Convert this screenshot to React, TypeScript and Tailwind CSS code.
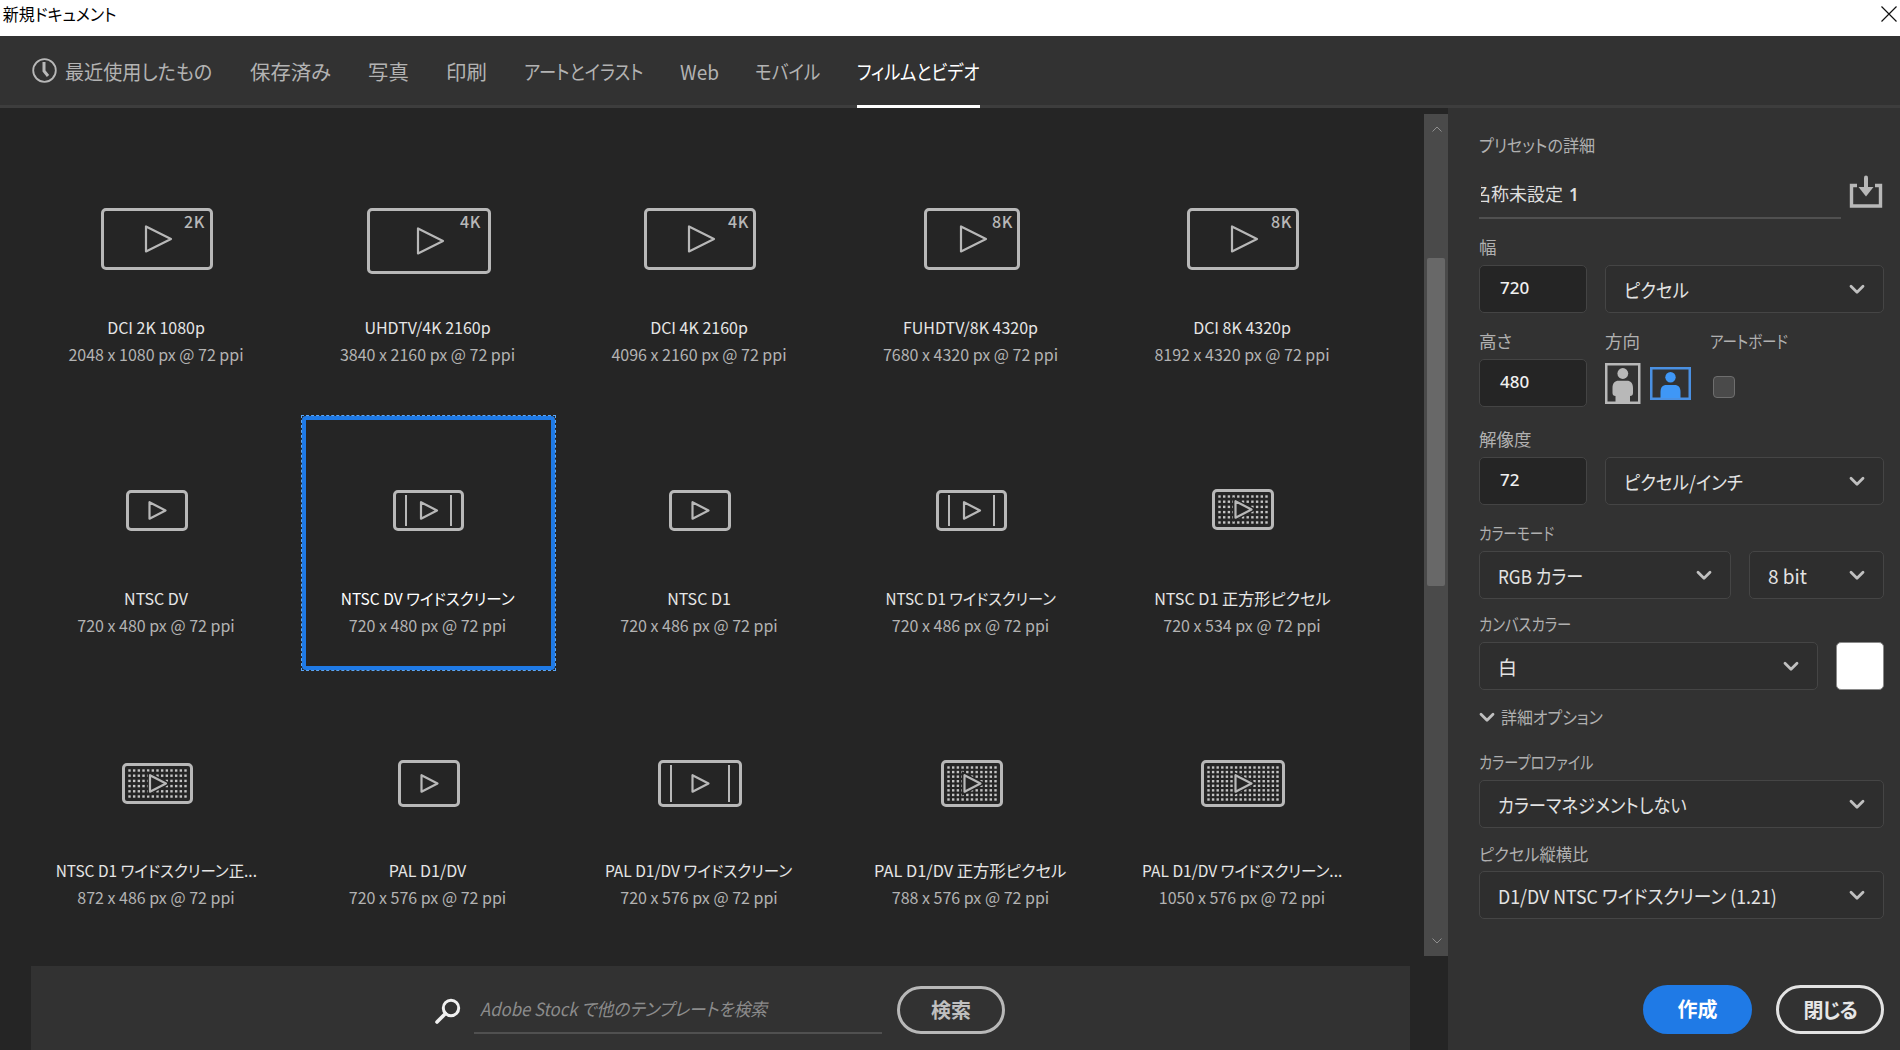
import type { ReactNode } from "react";

type Kind = "plain" | "wide" | "dots";

type Preset = {
  name: string;
  size: string;
  w: number;
  h: number;
  kind: Kind;
  badge?: string;
  badgeInset?: number;
  iconTop: string;
  squeeze?: string;
  selected?: boolean;
};

const tabs = [
  { label: "保存済み", box: "ml-[38px] w-[81px]", scale: "scale-x-[1.02]" },
  { label: "写真", box: "ml-[37px] w-[41px]", scale: "scale-x-[1.02]" },
  { label: "印刷", box: "ml-[37px] w-[41px]", scale: "scale-x-[1.02]" },
  { label: "アートとイラスト", box: "ml-[37px] w-[120px]", scale: "scale-x-[0.865]" },
  { label: "Web", box: "ml-[36px] w-[39px]", scale: "scale-x-[0.95]" },
  { label: "モバイル", box: "ml-[36px] w-[66px]", scale: "scale-x-[0.88]" },
  { label: "フィルムとビデオ", box: "ml-[36px] w-[123px]", scale: "scale-x-[0.862]", active: true },
];

const presets: Preset[] = [
  { name: "DCI 2K 1080p", size: "2048 x 1080 px @ 72 ppi", w: 112, h: 62, kind: "plain", badge: "2K", badgeInset: 8, iconTop: "pt-[64px]" },
  { name: "UHDTV/4K 2160p", size: "3840 x 2160 px @ 72 ppi", w: 124, h: 66, kind: "plain", badge: "4K", badgeInset: 10, iconTop: "pt-[64px]" },
  { name: "DCI 4K 2160p", size: "4096 x 2160 px @ 72 ppi", w: 112, h: 62, kind: "plain", badge: "4K", badgeInset: 7, iconTop: "pt-[64px]" },
  { name: "FUHDTV/8K 4320p", size: "7680 x 4320 px @ 72 ppi", w: 96, h: 62, kind: "plain", badge: "8K", badgeInset: 7, iconTop: "pt-[64px]" },
  { name: "DCI 8K 4320p", size: "8192 x 4320 px @ 72 ppi", w: 112, h: 62, kind: "plain", badge: "8K", badgeInset: 7, iconTop: "pt-[64px]" },
  { name: "NTSC DV", size: "720 x 480 px @ 72 ppi", w: 62, h: 41, kind: "plain", iconTop: "pt-[75px]" },
  { name: "NTSC DV ワイドスクリーン", size: "720 x 480 px @ 72 ppi", w: 71, h: 41, kind: "wide", iconTop: "pt-[75px]", squeeze: "scale-x-[0.97]", selected: true },
  { name: "NTSC D1", size: "720 x 486 px @ 72 ppi", w: 62, h: 41, kind: "plain", iconTop: "pt-[75px]" },
  { name: "NTSC D1 ワイドスクリーン", size: "720 x 486 px @ 72 ppi", w: 71, h: 41, kind: "wide", iconTop: "pt-[75px]", squeeze: "scale-x-[0.95]" },
  { name: "NTSC D1 正方形ピクセル", size: "720 x 534 px @ 72 ppi", w: 62, h: 41, kind: "dots", iconTop: "pt-[74px]", squeeze: "scale-x-[1.01]" },
  { name: "NTSC D1 ワイドスクリーン正...", size: "872 x 486 px @ 72 ppi", w: 71, h: 41, kind: "dots", iconTop: "pt-[76px]", squeeze: "scale-x-[0.965]" },
  { name: "PAL D1/DV", size: "720 x 576 px @ 72 ppi", w: 62, h: 47, kind: "plain", iconTop: "pt-[73px]" },
  { name: "PAL D1/DV ワイドスクリーン", size: "720 x 576 px @ 72 ppi", w: 84, h: 47, kind: "wide", iconTop: "pt-[73px]", squeeze: "scale-x-[0.97]" },
  { name: "PAL D1/DV 正方形ピクセル", size: "788 x 576 px @ 72 ppi", w: 62, h: 47, kind: "dots", iconTop: "pt-[73px]", squeeze: "scale-x-[1.02]" },
  { name: "PAL D1/DV ワイドスクリーン...", size: "1050 x 576 px @ 72 ppi", w: 84, h: 47, kind: "dots", iconTop: "pt-[73px]", squeeze: "scale-x-[0.97]" },
];

function Dots({ w, h }: { w: number; h: number }) {
  const cols = Math.round((w - 15) / 4.72) + 1;
  const rows = Math.round((h - 15) / 4.9) + 1;
  const dx = (w - 15) / (cols - 1);
  const dy = (h - 15) / (rows - 1);
  const cells = [];
  for (let r = 0; r < rows; r++) {
    for (let c = 0; c < cols; c++) {
      cells.push(
        <rect key={`${r}-${c}`} x={7.5 + c * dx - 1.2} y={7.5 + r * dy - 1.2} width="2.4" height="2.4" fill="#c4c4c4" />
      );
    }
  }
  return <g>{cells}</g>;
}

function PresetIcon({ p }: { p: Preset }) {
  const big = p.h > 50;
  const tw = big ? 25 : 16;
  const th = big ? 25 : 16.5;
  const left = p.w / 2 - tw / 2 + (big ? 1.5 : 0.5);
  const top = p.h / 2 - th / 2;
  const tri = `M${left} ${top}v${th}l${tw} ${-th / 2}z`;
  return (
    <svg width={p.w} height={p.h} viewBox={`0 0 ${p.w} ${p.h}`} fill="none">
      <rect x="1.5" y="1.5" width={p.w - 3} height={p.h - 3} rx="3.5" stroke="#b8b8b8" strokeWidth="3" />
      {p.kind === "wide" && (
        <path
          d={`M13 5V${p.h - 5}M${p.w - 13} 5V${p.h - 5}`}
          stroke="#b8b8b8"
          strokeWidth="2"
        />
      )}
      {p.kind === "dots" && (
        <>
          <Dots w={p.w} h={p.h} />
          <path d={tri} stroke="#252525" strokeWidth="5" fill="#252525" />
        </>
      )}
      <path d={tri} stroke="#b8b8b8" strokeWidth="2.2" strokeLinejoin="round" />
      {p.badge && (
        <text x={p.w - (p.badgeInset ?? 8)} y="20" textAnchor="end" fontSize="16" fontWeight="500" letterSpacing="0.6" fill="#b8b8b8">
          {p.badge}
        </text>
      )}
    </svg>
  );
}

function PresetCard({ p }: { p: Preset }) {
  return (
    <div className="relative h-[255px] w-[255px] flex flex-col items-center text-center whitespace-nowrap">
      {p.selected && (
        <div className="absolute inset-x-0 top-0 h-[256px] border border-dashed border-[#5aa5f5]">
          <div className="h-full w-full rounded-[4px] border-[4px] border-[#1f7ae6]" />
        </div>
      )}
      <div className={`h-[171px] ${p.iconTop}`}>
        <PresetIcon p={p} />
      </div>
      <div className={`h-6 mr-[2px] leading-6 text-base ${p.squeeze ?? ""} ${p.selected ? "text-white" : "text-[#e6e6e6]"}`}>
        {p.name}
      </div>
      <div className="mt-[3px] mr-[2px] h-6 leading-6 text-base text-[#b3b3b3]">{p.size}</div>
    </div>
  );
}

function Chevron({ className = "" }: { className?: string }) {
  return (
    <svg className={`shrink-0 ${className}`} width="16" height="11" viewBox="0 0 16 11" fill="none">
      <path d="M2 2.2l6 6 6-6" stroke="#c0c0c0" strokeWidth="2.8" strokeLinecap="round" strokeLinejoin="round" />
    </svg>
  );
}

function Label({ children, className = "" }: { children: ReactNode; className?: string }) {
  return (
    <div className={`h-6 leading-[23px] text-[17.5px] text-[#b0b0b0] whitespace-nowrap origin-left ${className}`}>
      {children}
    </div>
  );
}

function Select({ value, width, scale = "" }: { value: string; width: string; scale?: string }) {
  return (
    <div className={`h-12 ${width} shrink-0 flex items-center justify-between rounded-[5px] border-[1.5px] border-[#454545] bg-[#2e2e2e] pl-[18px] pr-[18px]`}>
      <span className={`pt-0.5 text-[19px] leading-7 text-[#e3e3e3] whitespace-nowrap origin-left ${scale}`}>{value}</span>
      <Chevron />
    </div>
  );
}

function NumberField({ value }: { value: string }) {
  return (
    <div className="h-12 w-[108px] shrink-0 flex items-center rounded-[5px] border-[1.5px] border-[#444444] bg-[#252525] pl-5 pb-[2px] font-['Noto_Sans'] text-[17px] font-medium text-[#f0f0f0]">
      {value}
    </div>
  );
}

function DetailsPanel() {
  return (
    <aside className="w-[452px] shrink-0 bg-[#323232] pl-[31px] pr-4 pt-[25px]">
      <Label className="scale-x-[0.92]">プリセットの詳細</Label>

      <div className="mt-[13px] h-[49px] flex justify-between">
        <div className="w-[362px] border-b-2 border-[#505050] pl-[2px]">
          <div className="overflow-hidden">
            <div className="-ml-[8px] h-[47px] leading-[46px] text-lg text-[#dedede] whitespace-pre">
              名称未設定 <span className="font-['Noto_Sans'] text-[17px] font-semibold ml-[2px]">1</span>
            </div>
          </div>
        </div>
        <svg className="mt-[5px] mr-px" width="34" height="34" viewBox="0 0 34 34" fill="none">
          <path d="M8 10.5H2.5V31h29V10.5H26" stroke="#b8b8b8" strokeWidth="3.4" />
          <path d="M17 2.5V14" stroke="#b8b8b8" strokeWidth="4" strokeLinecap="round" />
          <path d="M9.5 12h15L17 21.5z" fill="#b8b8b8" />
        </svg>
      </div>

      <Label className="mt-4">幅</Label>
      <div className="mt-1.5 flex gap-[18px]">
        <NumberField value="720" />
        <Select value="ピクセル" width="w-[279px]" scale="scale-x-[0.92]" />
      </div>

      <div className="mt-4 flex">
        <Label className="w-[126px]">高さ</Label>
        <Label className="w-[105px]">方向</Label>
        <Label className="scale-x-[0.83]">アートボード</Label>
      </div>
      <div className="mt-1.5 flex">
        <NumberField value="480" />
        <svg className="ml-[18px] mt-1" width="36" height="41" viewBox="0 0 36 41">
          <rect x="1.25" y="1.25" width="33" height="38.5" fill="none" stroke="#b8b8b8" strokeWidth="2.5" />
          <circle cx="17.8" cy="10.5" r="5.4" fill="#b8b8b8" />
          <path d="M7.5 25c0-5 2.5-7.3 6-7.3h8.5c3.5 0 6 2.3 6 7.3v5c0 2-1 3-3 3v7H10.5v-7c-2 0-3-1-3-3z" fill="#b8b8b8" />
        </svg>
        <svg className="ml-[9px] mt-2" width="41" height="33" viewBox="0 0 41 33">
          <rect x="1.25" y="1.25" width="38.5" height="30.5" fill="none" stroke="#4a90e2" strokeWidth="2.5" />
          <circle cx="20.5" cy="10.3" r="5.2" fill="#3f97f6" />
          <path d="M10.5 31v-6c0-4.500 2-7 6-7h8c4 0 6 2.500 6 7v6z" fill="#3f97f6" />
        </svg>
        <div className="ml-[22px] mt-[17px] size-[22px] rounded-[4px] border-[1.5px] border-[#6e6e6e] bg-[#4a4a4a]" />
      </div>

      <Label className="mt-5">解像度</Label>
      <div className="mt-1.5 flex gap-[18px]">
        <NumberField value="72" />
        <Select value="ピクセル/インチ" width="w-[279px]" scale="scale-x-[0.92]" />
      </div>

      <Label className="mt-4 scale-x-[0.78]">カラーモード</Label>
      <div className="mt-1.5 flex gap-[18px]">
        <Select value="RGB カラー" width="w-[252px]" scale="scale-x-[0.9]" />
        <Select value="8 bit" width="w-[135px]" />
      </div>

      <Label className="mt-[13px] scale-x-[0.82]">カンバスカラー</Label>
      <div className="mt-1.5 flex gap-[18px]">
        <Select value="白" width="w-[339px]" />
        <div className="size-12 rounded-[5px] border border-[#8a8a8a] bg-white" />
      </div>

      <div className="mt-[15px] flex items-center">
        <Chevron className="mr-1.5" />
        <Label className="scale-x-[0.91]">詳細オプション</Label>
      </div>

      <Label className="mt-[21px] scale-x-[0.81]">カラープロファイル</Label>
      <div className="mt-1.5">
        <Select value="カラーマネジメントしない" width="w-[405px]" scale="scale-x-[0.91]" />
      </div>

      <Label className="mt-3.5 scale-x-[0.93]">ピクセル縦横比</Label>
      <div className="mt-[5px]">
        <Select value="D1/DV NTSC ワイドスクリーン (1.21)" width="w-[405px]" scale="scale-x-[0.935]" />
      </div>

      <div className="mt-[66px] flex justify-end gap-6 text-xl font-bold">
        <button className="h-[49px] w-[109px] rounded-full bg-[#1f7ae6] text-white leading-none pb-px">作成</button>
        <button className="h-[49px] w-[108px] rounded-full border-[3px] border-[#e3e3e3] text-[#e6e6e6] leading-none whitespace-nowrap tracking-[-1.2px]">
          閉じる
        </button>
      </div>
    </aside>
  );
}

export default function App() {
  return (
    <div className="h-[1050px] w-[1900px] overflow-hidden flex flex-col bg-[#252525] font-['Noto_Sans_CJK_JP',sans-serif] [font-feature-settings:'palt']">
      {/* Title bar */}
      <div className="h-9 shrink-0 flex justify-between bg-white text-black">
        <span className="pl-[3px] text-[17px] leading-[28px] origin-left scale-x-[0.94] whitespace-nowrap">新規ドキュメント</span>
        <svg className="mt-1.5 mr-[3px]" width="16" height="16" viewBox="0 0 16 16">
          <path d="M0.5 0.5l15 15M15.5 0.5l-15 15" stroke="#111" strokeWidth="1.2" />
        </svg>
      </div>

      {/* Category tabs */}
      <nav className="h-[72px] shrink-0 flex bg-[#323232] border-b-[3px] border-[#3d3d3d] pl-8 text-xl leading-[72px] text-[#b3b3b3]">
        <svg className="mt-[22px]" width="25" height="25" viewBox="0 0 25 25" fill="none">
          <circle cx="12.5" cy="12.5" r="11.3" stroke="#b8b8b8" strokeWidth="1.8" />
          <path d="M12 4v9l4 5" stroke="#b8b8b8" strokeWidth="3" />
        </svg>
        <div className="ml-2 w-[147px] shrink-0 whitespace-nowrap">
          <div className="origin-left scale-x-[0.955]">最近使用したもの</div>
        </div>
        {tabs.map((t) => (
          <div
            key={t.label}
            className={`h-[72px] shrink-0 whitespace-nowrap ${t.box} ${t.active ? "border-b-[3px] border-white text-white" : ""}`}
          >
            <div className={`origin-left ${t.scale}`}>{t.label}</div>
          </div>
        ))}
      </nav>

      <div className="flex min-h-0 flex-1">
        <main className="flex w-[1424px] shrink-0 flex-col">
          <div className="grid grid-cols-[repeat(5,255px)] gap-x-[16.5px] gap-y-[16.5px] pl-[29.5px] pt-[35.5px]">
            {presets.map((p) => (
              <PresetCard key={p.name} p={p} />
            ))}
          </div>

          {/* Stock search */}
          <div className="mt-[24.5px] ml-[31px] w-[1379px] flex-1 flex bg-[#323232] pl-[403px] pt-5">
            <svg className="mt-3" width="28" height="28" viewBox="0 0 28 28" fill="none">
              <circle cx="17" cy="10" r="7.7" stroke="#f0f0f0" strokeWidth="3" />
              <path d="M11.5 15.5L3 24" stroke="#f0f0f0" strokeWidth="3.6" strokeLinecap="round" />
            </svg>
            <div className="ml-3 h-12 w-[408px] border-b-2 border-[#505050] pl-1.5 text-lg italic leading-[45px] text-[#8c8c8c] whitespace-nowrap">
              <div className="origin-left scale-x-[0.928]">Adobe Stock で他のテンプレートを検索</div>
            </div>
            <button className="ml-[15px] h-12 w-[108px] rounded-full border-[3px] border-[#b8b8b8] pb-px text-xl font-bold leading-none text-[#c0c0c0]">
              検索
            </button>
          </div>
        </main>

        {/* Scrollbar */}
        <div className="mt-1.5 h-[842px] w-6 shrink-0 flex flex-col items-center bg-[#4a4a4a]">
          <svg className="mt-3 ml-0.5" width="10" height="6" viewBox="0 0 10 6" fill="none">
            <path d="M0.5 5.5L5 1l4.5 4.5" stroke="#8f8f8f" />
          </svg>
          <div className="mt-[126px] h-[328px] w-[18px] rounded-[2px] bg-[#686868]" />
          <svg className="mt-auto mb-3 ml-0.5" width="10" height="6" viewBox="0 0 10 6" fill="none">
            <path d="M0.5 0.5L5 5l4.5-4.5" stroke="#8f8f8f" />
          </svg>
        </div>

        <DetailsPanel />
      </div>
    </div>
  );
}
